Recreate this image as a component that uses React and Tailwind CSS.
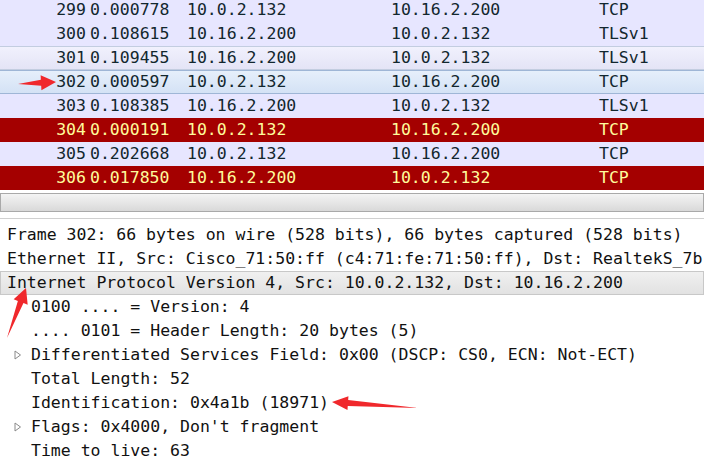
import React from "react";

const packets = [
  { no: "299", time: "0.000778", src: "10.0.2.132", dst: "10.16.2.200", proto: "TCP", kind: "tcp" },
  { no: "300", time: "0.108615", src: "10.16.2.200", dst: "10.0.2.132", proto: "TLSv1", kind: "tcp" },
  { no: "301", time: "0.109455", src: "10.16.2.200", dst: "10.0.2.132", proto: "TLSv1", kind: "hover" },
  { no: "302", time: "0.000597", src: "10.0.2.132", dst: "10.16.2.200", proto: "TCP", kind: "selected" },
  { no: "303", time: "0.108385", src: "10.16.2.200", dst: "10.0.2.132", proto: "TLSv1", kind: "tcp" },
  { no: "304", time: "0.000191", src: "10.0.2.132", dst: "10.16.2.200", proto: "TCP", kind: "bad" },
  { no: "305", time: "0.202668", src: "10.0.2.132", dst: "10.16.2.200", proto: "TCP", kind: "tcp" },
  { no: "306", time: "0.017850", src: "10.16.2.200", dst: "10.0.2.132", proto: "TCP", kind: "bad" },
];

const rowStyles = {
  tcp: "bg-[#e7e6ff] text-[#12272e]",
  hover: "bg-gradient-to-b from-[#f1f1fd] to-[#e4e4f6] text-[#12272e] border-y border-[#c3cde0]",
  selected: "bg-gradient-to-b from-[#e6effb] to-[#d4e2f5] text-[#12272e] border-y border-[#9fb6d6]",
  bad: "bg-[#a40000] text-[#fffc9c]",
};

const details = [
  { text: "Frame 302: 66 bytes on wire (528 bits), 66 bytes captured (528 bits)", indent: 0 },
  { text: "Ethernet II, Src: Cisco_71:50:ff (c4:71:fe:71:50:ff), Dst: RealtekS_7b:", indent: 0 },
  { text: "Internet Protocol Version 4, Src: 10.0.2.132, Dst: 10.16.2.200", indent: 0, active: true },
  { text: "0100 .... = Version: 4", indent: 1 },
  { text: ".... 0101 = Header Length: 20 bytes (5)", indent: 1 },
  { text: "Differentiated Services Field: 0x00 (DSCP: CS0, ECN: Not-ECT)", indent: 1, expander: true },
  { text: "Total Length: 52", indent: 1 },
  { text: "Identification: 0x4a1b (18971)", indent: 1 },
  { text: "Flags: 0x4000, Don't fragment", indent: 1, expander: true },
  { text: "Time to live: 63", indent: 1 },
];

const Arrow = ({ x1, y1, x2, y2, headLen = 15, headW = 7.5, neckW = 3 }) => {
  // tapered arrow from (x1,y1) tail to (x2,y2) tip
  const dx = x2 - x1;
  const dy = y2 - y1;
  const len = Math.hypot(dx, dy);
  const ux = dx / len;
  const uy = dy / len;
  const px = -uy;
  const py = ux;
  const bx = x2 - ux * headLen;
  const by = y2 - uy * headLen;
  const pts = [
    [x1, y1],
    [bx + px * neckW, by + py * neckW],
    [bx + px * headW, by + py * headW],
    [x2, y2],
    [bx - px * headW, by - py * headW],
    [bx - px * neckW, by - py * neckW],
  ]
    .map((p) => p.join(","))
    .join(" ");
  return <polygon points={pts} fill="#f0282c" />;
};

const App = () => {
  return (
    <div
      className="relative w-[704px] h-[456px] overflow-hidden bg-white text-[16.5px] leading-[24px]"
      style={{ fontFamily: '"DejaVu Sans Mono", "Liberation Mono", monospace' }}
    >
      {/* packet list */}
      <div className="-mt-[2px]">
        {packets.map((p) => (
          <div key={p.no} className={`flex h-[24px] items-center whitespace-pre ${rowStyles[p.kind]}`}>
            <span className="w-[86px] text-right">{p.no}</span>
            <span className="ml-[4px] w-[97px]">{p.time}</span>
            <span className="w-[204px]">{p.src}</span>
            <span className="w-[208px]">{p.dst}</span>
            <span>{p.proto}</span>
          </div>
        ))}
      </div>

      {/* splitter / scrollbar */}
      <div className="h-[33px] pt-[3px]">
        <div className="h-[19px] border border-[#a9a9a9] bg-gradient-to-b from-[#f4f4f4] to-[#d9d9d9]" />
        <div className="mt-[6px] border-t border-[#d0d0d0]" />
      </div>

      {/* packet details */}
      <div className="text-[#111]">
        {details.map((d, i) => (
          <div
            key={i}
            className={`relative flex h-[24px] items-center whitespace-pre ${
              d.active ? "bg-gradient-to-b from-[#f0f0f0] to-[#e2e2e2] border border-[#c8c8c8]" : ""
            }`}
            style={{ paddingLeft: d.indent ? 31 : d.active ? 6 : 7 }}
          >
            {d.expander && (
              <svg className="absolute left-[14px] top-[7px]" width="8" height="10" viewBox="0 0 8 10">
                <path d="M1 1 L6.5 5 L1 9 Z" fill="none" stroke="#8a8a8a" strokeWidth="1" />
              </svg>
            )}
            {d.text}
          </div>
        ))}
      </div>

      {/* annotation arrows */}
      <svg className="pointer-events-none absolute left-0 top-0" width="704" height="456">
        <Arrow x1={18} y1={84} x2={56} y2={82} />
        <Arrow x1={7} y1={338} x2={26} y2={288} />
        <Arrow x1={418} y1={408} x2={332} y2={402} headLen={16} headW={7} />
      </svg>
    </div>
  );
};

export default App;
